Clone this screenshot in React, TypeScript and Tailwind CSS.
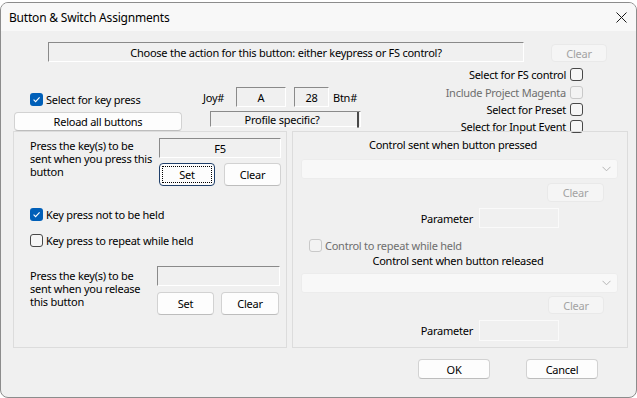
import React from "react";

function Check() {
  return (
    <svg width="9" height="9" viewBox="0 0 9 9">
      <path d="M1.6 4.7 L3.6 6.6 L7.6 2.3" fill="none" stroke="white" strokeWidth="1.1" />
    </svg>
  );
}

function Box({ checked = false, disabled = false }: { checked?: boolean; disabled?: boolean }) {
  if (checked)
    return (
      <span className="w-[13px] h-[13px] rounded-[3px] bg-[#005fb8] flex items-center justify-center shrink-0">
        <Check />
      </span>
    );
  return (
    <span
      className={
        disabled
          ? "w-[13px] h-[13px] rounded-[3px] border border-[#c9c9c9] bg-[#f3f3f3] shrink-0"
          : "w-[13px] h-[13px] rounded-[3px] border border-[#484848] bg-[#f6f6f6] shrink-0"
      }
    />
  );
}

function Btn({ children, className = "", disabled = false }: { children: React.ReactNode; className?: string; disabled?: boolean }) {
  return (
    <div
      className={
        (disabled
          ? "bg-[#f5f5f5] border-[#e9e9e9] text-[#a3a3a3] "
          : "bg-[#fdfdfd] border-[#d2d2d2] border-b-[#bdbdbd] text-black ") +
        "flex items-center justify-center rounded-[4px] border shrink-0 " +
        className
      }
    >
      {children}
    </div>
  );
}

const sunken =
  "border border-t-[#8a8a8a] border-l-[#8a8a8a] border-r-white border-b-white bg-[#f0f0f0] shrink-0";

function Combo({ className = "" }: { className?: string }) {
  return (
    <div className={"h-[20px] w-[317px] bg-[#f8f8f8] border border-[#ececec] rounded-[3px] flex items-center justify-end pr-[6px] " + className}>
      <svg width="9" height="6" viewBox="0 0 9 6">
        <path d="M0.5 0.8 L4.5 4.8 L8.5 0.8" fill="none" stroke="#b5b5b5" strokeWidth="1" />
      </svg>
    </div>
  );
}

export default function App() {
  return (
    <div className="w-[637px] h-[398px] bg-white overflow-hidden font-['Noto_Sans',sans-serif] text-[11px] tracking-[-0.25px] leading-[13px] text-black">
      <div className="h-[2px] bg-white" />
      <div className="h-[396px] border border-[#8c8c8c] rounded-[8px] bg-[#f0f0f0] overflow-hidden flex flex-col">
        {/* title bar */}
        <div className="h-[28px] bg-[#f8f8f8] flex items-center shrink-0">
          <span className="ml-[8px] text-[12px] tracking-[-0.2px]">Button &amp; Switch Assignments</span>
          <svg className="ml-auto mr-[9px]" width="11" height="11" viewBox="0 0 11 11">
            <path d="M0.5 0.5 L10.5 10.5 M10.5 0.5 L0.5 10.5" stroke="#1a1a1a" strokeWidth="1" />
          </svg>
        </div>

        {/* row 1 */}
        <div className="flex items-start mt-[11px] shrink-0">
          <div className={"ml-[47px] w-[476px] h-[20px] flex items-center justify-center " + sunken}>
            Choose the action for this button: either keypress or FS control?
          </div>
          <Btn disabled className="ml-[27px] mt-[2px] w-[56px] h-[18px]">Clear</Btn>
        </div>

        {/* middle section */}
        <div className="flex h-[69px] shrink-0">
          <div className="w-[182px] flex flex-col pt-[31px] shrink-0">
            <div className="flex items-center gap-[3px] ml-[29px] h-[13px]">
              <Box checked />
              <span>Select for key press</span>
            </div>
            <Btn className="mt-[6px] ml-[13px] w-[168px] h-[19px]">Reload all buttons</Btn>
          </div>
          <div className="flex flex-col pt-[25px] shrink-0">
            <div className="flex items-center ml-[20px] h-[20px]">
              <span className="w-[33px]">Joy#</span>
              <div className={"w-[50px] h-[20px] flex items-center justify-center " + sunken}>A</div>
              <div className={"ml-[8px] w-[35px] h-[20px] flex items-center justify-center " + sunken}>28</div>
              <span className="ml-[4px]">Btn#</span>
            </div>
            <div className={"mt-[4px] ml-[27px] w-[151px] h-[16px] flex items-center " + sunken}>
              <span className="flex-1 text-center pr-[4px]">Profile specific?</span>
              <span className="mr-[1px]">
                <Box />
              </span>
            </div>
          </div>
          <div className="ml-auto mr-[53px] pt-[6px] flex flex-col items-end shrink-0">
            <div className="flex items-center gap-[4px] h-[13px]">
              <span>Select for FS control</span>
              <Box />
            </div>
            <div className="flex items-center gap-[4px] h-[13px] mt-[5px]">
              <span className="text-[#6e6e6e]">Include Project Magenta</span>
              <Box disabled />
            </div>
            <div className="flex items-center gap-[4px] h-[13px] mt-[4px]">
              <span>Select for Preset</span>
              <Box />
            </div>
            <div className="flex items-center gap-[4px] h-[13px] mt-[4px]">
              <span>Select for Input Event</span>
              <Box />
            </div>
          </div>
        </div>

        {/* groups */}
        <div className="flex h-[217px] shrink-0">
          {/* left group */}
          <div className="ml-[12px] w-[274px] h-[217px] border border-[#dcdcdc] flex flex-col shrink-0">
            <div className="flex mt-[6px]">
              <div className="ml-[16px] w-[129px] pt-[1px]">
                Press the key(s) to be
                <br />
                sent when you press this
                <br />
                button
              </div>
              <div className="w-[122px] flex flex-col">
                <div className={"h-[20px] w-[122px] flex items-center justify-center " + sunken}>F5</div>
                <div className="flex mt-[5px]">
                  <div className="w-[56px] h-[23px] rounded-[4px] border border-[#1f3f6a] bg-[#fdfdfd] flex items-center justify-center p-[2px]">
                    <div className="w-full h-full border border-dotted border-black flex items-center justify-center">Set</div>
                  </div>
                  <Btn className="ml-[9px] w-[57px] h-[23px]">Clear</Btn>
                </div>
              </div>
            </div>
            <div className="flex items-center gap-[3px] ml-[16px] h-[13px] mt-[22px]">
              <Box checked />
              <span>Key press not to be held</span>
            </div>
            <div className="flex items-center gap-[3px] ml-[16px] h-[13px] mt-[13px]">
              <Box />
              <span>Key press to repeat while held</span>
            </div>
            <div className="flex mt-[19px]">
              <div className="ml-[16px] w-[127px] pt-[3px]">
                Press the key(s) to be
                <br />
                sent when you release
                <br />
                this button
              </div>
              <div className="w-[123px] flex flex-col">
                <div className={"h-[20px] w-[123px] " + sunken}></div>
                <div className="flex mt-[6px]">
                  <Btn className="w-[57px] h-[23px]">Set</Btn>
                  <Btn className="ml-[7px] w-[58px] h-[23px]">Clear</Btn>
                </div>
              </div>
            </div>
          </div>

          {/* right group */}
          <div className="ml-[5px] w-[336px] h-[217px] border border-[#dcdcdc] flex flex-col shrink-0">
            <div className="mt-[6px] h-[13px] flex justify-center pr-[14px] whitespace-nowrap">
              Control sent when button pressed
            </div>
            <Combo className="mt-[8px] ml-[8px]" />
            <Btn disabled className="mt-[4px] ml-[254px] w-[57px] h-[19px]">Clear</Btn>
            <div className="flex items-center mt-[6px]">
              <div className="w-[180px] text-right">Parameter</div>
              <div className="ml-[6px] w-[80px] h-[20px] border border-[#fafafa] bg-[#f0f0f0]" />
            </div>
            <div className="flex items-center gap-[3px] ml-[16px] h-[13px] mt-[11px]">
              <Box disabled />
              <span className="text-[#6e6e6e]">Control to repeat while held</span>
            </div>
            <div className="mt-[2px] h-[13px] flex justify-center pr-[4px] whitespace-nowrap">
              Control sent when button released
            </div>
            <Combo className="mt-[6px] ml-[8px]" />
            <Btn disabled className="mt-[3px] ml-[255px] w-[56px] h-[18px]">Clear</Btn>
            <div className="flex items-center mt-[6px]">
              <div className="w-[180px] text-right">Parameter</div>
              <div className="ml-[6px] w-[80px] h-[21px] border border-[#fafafa] bg-[#f0f0f0]" />
            </div>
          </div>
        </div>

        {/* buttons */}
        <div className="flex mt-[11px] shrink-0">
          <Btn className="ml-[417px] w-[72px] h-[20px]">OK</Btn>
          <Btn className="ml-[36px] w-[72px] h-[20px]">Cancel</Btn>
        </div>
      </div>
    </div>
  );
}
